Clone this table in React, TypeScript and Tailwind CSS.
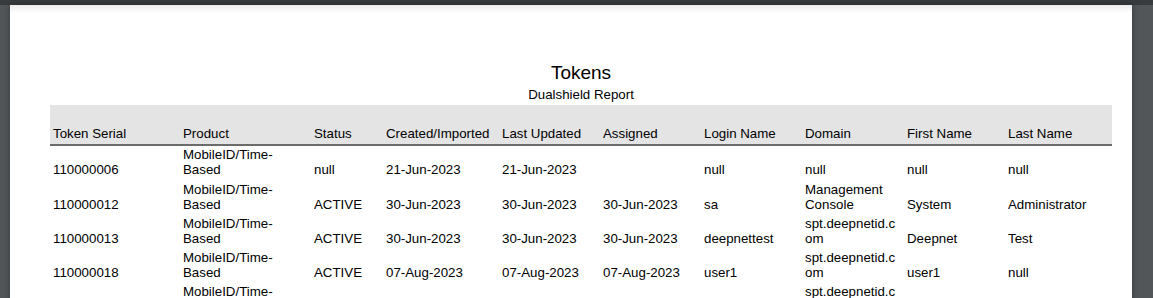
import React from 'react';

const columns = [
  'Token Serial',
  'Product',
  'Status',
  'Created/Imported',
  'Last Updated',
  'Assigned',
  'Login Name',
  'Domain',
  'First Name',
  'Last Name',
];

// line breaks follow the report's own wrapping
const rows: string[][] = [
  ['110000006', 'MobileID/Time-\nBased', 'null', '21-Jun-2023', '21-Jun-2023', '', 'null', 'null', 'null', 'null'],
  ['110000012', 'MobileID/Time-\nBased', 'ACTIVE', '30-Jun-2023', '30-Jun-2023', '30-Jun-2023', 'sa', 'Management\nConsole', 'System', 'Administrator'],
  ['110000013', 'MobileID/Time-\nBased', 'ACTIVE', '30-Jun-2023', '30-Jun-2023', '30-Jun-2023', 'deepnettest', 'spt.deepnetid.c\nom', 'Deepnet', 'Test'],
  ['110000018', 'MobileID/Time-\nBased', 'ACTIVE', '07-Aug-2023', '07-Aug-2023', '07-Aug-2023', 'user1', 'spt.deepnetid.c\nom', 'user1', 'null'],
  ['110000019', 'MobileID/Time-\nBased', 'ACTIVE', '07-Aug-2023', '07-Aug-2023', '07-Aug-2023', 'user2', 'spt.deepnetid.c\nom', 'user2', 'null'],
];

const gridCols = 'grid grid-cols-[130px_131px_72px_116px_101px_101px_101px_102px_101px_107px]';

export default function App() {
  return (
    <div className="h-[298px] w-[1153px] overflow-hidden bg-[#525659] font-['Liberation_Sans',Arial,sans-serif] text-black">
      <div className="h-[5px] bg-[#383b3e]" />
      <div className="ml-[10px] h-[400px] w-[1122px] bg-white shadow-[0_0_6px_rgba(0,0,0,0.35)]">
        <div className="h-[8px] bg-gradient-to-b from-[#ececec] to-white" />

        <div className="ml-[40px] w-[1062px]">
          {/* Title block */}
          <div className="pt-[49px] text-center">
            <div className="text-[19px] leading-[21px]">Tokens</div>
            <div className="mt-[4px] text-[13.3px] leading-[15px]">Dualshield Report</div>
          </div>

          <div className="mt-[3px] text-[13.3px] leading-[15px]">
            {/* Header */}
            <div className={`${gridCols} h-[39px] items-end bg-[#e4e4e4] pb-[3px]`}>
              {columns.map((c) => (
                <div key={c} className="pl-[3px]">
                  {c}
                </div>
              ))}
            </div>
            <div className="h-[2px] bg-[#6b6b6b]" />

            {/* Body */}
            {rows.map((r) => (
              <div key={r[0]} className={`${gridCols} h-[34.3px] items-end pb-[3px]`}>
                {r.map((v, i) => (
                  <div key={i} className="whitespace-pre-line pl-[3px]">
                    {v}
                  </div>
                ))}
              </div>
            ))}
          </div>
        </div>
      </div>
    </div>
  );
}
